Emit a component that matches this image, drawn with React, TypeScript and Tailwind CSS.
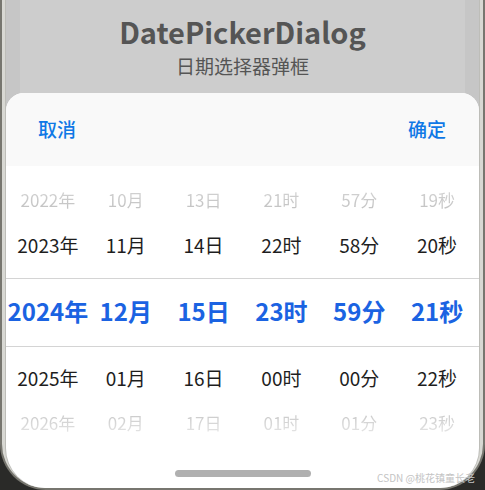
const font = { fontFamily: '"Noto Sans CJK SC", "Noto Sans", sans-serif' }

const columns = [
  ['2022年', '2023年', '2024年', '2025年', '2026年'],
  ['10月', '11月', '12月', '01月', '02月'],
  ['13日', '14日', '15日', '16日', '17日'],
  ['21时', '22时', '23时', '00时', '01时'],
  ['57分', '58分', '59分', '00分', '01分'],
  ['19秒', '20秒', '21秒', '22秒', '23秒'],
]

function Row({ index, className }: { index: number; className: string }) {
  return (
    <div className={`grid grid-cols-6 px-[3px] ${className}`}>
      {columns.map((col) => (
        <div key={col[index]} className="flex items-center justify-center whitespace-nowrap">
          {col[index]}
        </div>
      ))}
    </div>
  )
}

export default function App() {
  return (
    <div className="relative h-[490px] w-[485px] overflow-hidden bg-[#2a2a28]" style={font}>
      <div className="h-full rounded-b-[46px] border-x-2 border-b-2 border-[#77766f] bg-[#d8d8d3] px-[3px]">
        <div className="flex h-full flex-col overflow-hidden rounded-b-[40px] border-x border-[#bdbdb8] bg-[#c6c6c6]">
          <div className="mx-[14px] flex h-[93px] shrink-0 flex-col items-center bg-[#cdcdcd] pt-[13px]">
            <div className="text-[29px] leading-[36px] font-bold text-[#555555]">DatePickerDialog</div>
            <div className="mt-[4px] text-[19px] leading-[26px] text-[#555555]">日期选择器弹框</div>
          </div>

          <div className="flex flex-1 flex-col overflow-hidden rounded-t-[18px] bg-white">
            <div className="flex h-[73px] shrink-0 items-center justify-between bg-[#f9f9f9] pr-[33px] pl-[32px] text-[19px] font-medium text-[#0f78e6]">
              <span>取消</span>
              <span>确定</span>
            </div>

            <div className="pt-[11px] leading-none">
              <Row
                index={0}
                className="h-[45px] bg-linear-to-b from-[#dedede] to-[#b8b8b8] bg-clip-text text-[17px] text-transparent"
              />
              <Row index={1} className="h-[45px] text-[19px] text-[#1e1e1e]" />
              <div className="mt-[11px] border-y border-[#d4d4d4]">
                <Row index={2} className="h-[67px] pb-[3px] text-[24px] font-semibold text-[#1b63e2]" />
              </div>
              <Row index={3} className="mt-[8px] h-[45px] text-[19px] text-[#1e1e1e]" />
              <Row
                index={4}
                className="h-[45px] bg-linear-to-b from-[#b8b8b8] to-[#f4f4f4] bg-clip-text text-[17px] text-transparent"
              />
            </div>

            <div className="flex flex-1 items-end justify-center pb-[11px]">
              <div className="h-[7px] w-[136px] rounded-full bg-[#b0b0b0]" />
            </div>
          </div>
        </div>
      </div>

      <div className="absolute right-[10px] bottom-[5px] text-[10px] text-[#c4c4c4]">CSDN @桃花镇童长老</div>
    </div>
  )
}
